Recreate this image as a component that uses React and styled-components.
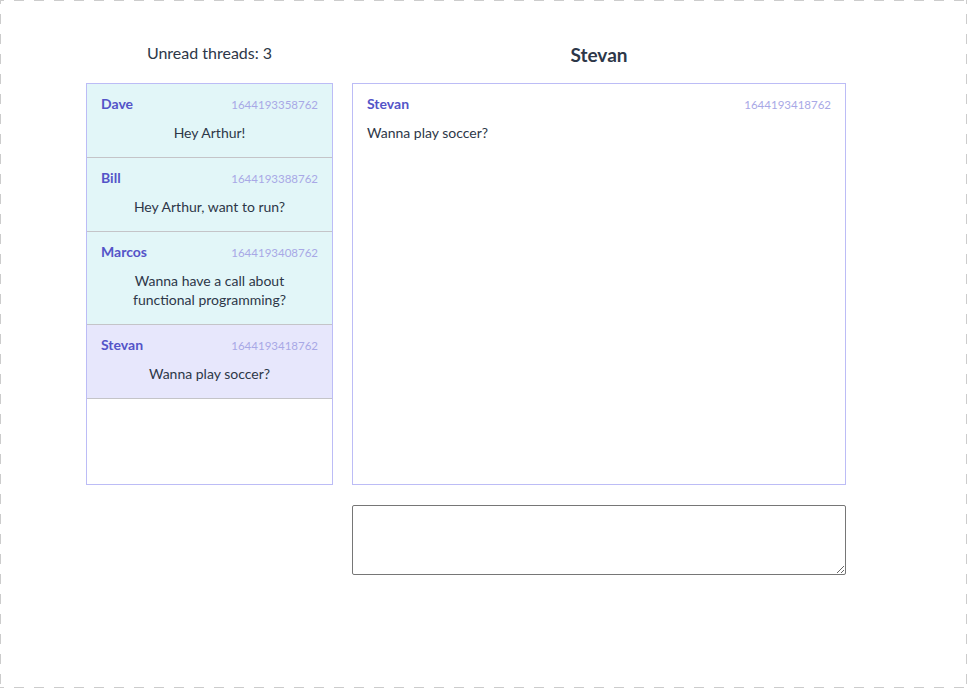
import styled, { createGlobalStyle } from "styled-components";

const GlobalStyle = createGlobalStyle`
  html, body {
    margin: 0;
    padding: 0;
    background: #ffffff;
  }
  body {
    font-family: Lato, "Noto Sans", sans-serif;
    color: #2d3748;
  }
`;

const threads = [
  { id: 1, name: "Dave", time: "1644193358762", text: "Hey Arthur!" },
  { id: 2, name: "Bill", time: "1644193388762", text: "Hey Arthur, want to run?" },
  {
    id: 3,
    name: "Marcos",
    time: "1644193408762",
    text: "Wanna have a call about functional programming?",
  },
  { id: 4, name: "Stevan", time: "1644193418762", text: "Wanna play soccer?" },
];

const selectedId = 4;

const App = () => {
  const selected = threads.find((t) => t.id === selectedId);

  return (
    <>
      <GlobalStyle />
      <Frame>
        <Column $width={247}>
          <Heading $size={16} $top={0}>
            Unread threads: 3
          </Heading>
          <ThreadList>
            {threads.map((t) => (
              <ThreadItem key={t.id} $active={t.id === selectedId}>
                <MetaRow>
                  <Author>{t.name}</Author>
                  <Stamp>{t.time}</Stamp>
                </MetaRow>
                <ThreadText>{t.text}</ThreadText>
              </ThreadItem>
            ))}
          </ThreadList>
        </Column>

        <Column $width={494}>
          <Heading $size={19} $bold $top={2}>
            {selected.name}
          </Heading>
          <ChatPanel>
            <MetaRow>
              <Author>{selected.name}</Author>
              <Stamp>{selected.time}</Stamp>
            </MetaRow>
            <ChatText>{selected.text}</ChatText>
          </ChatPanel>
          <Composer />
        </Column>
      </Frame>
    </>
  );
};

export default App;

const dash = "#cccccc";

const Frame = styled.div`
  box-sizing: border-box;
  width: 967px;
  height: 688px;
  display: flex;
  gap: 19px;
  padding: 41px 0 0 86px;
  background-image: linear-gradient(to right, ${dash} 50%, transparent 50%),
    linear-gradient(to right, ${dash} 50%, transparent 50%),
    linear-gradient(to bottom, ${dash} 50%, transparent 50%),
    linear-gradient(to bottom, ${dash} 50%, transparent 50%);
  background-size: 20px 1px, 20px 1px, 1px 20px, 1px 20px;
  background-repeat: repeat-x, repeat-x, repeat-y, repeat-y;
  background-position: 14px 0, 14px 100%, 0 14px, 100% 14px;
`;

const Column = styled.div`
  width: ${(p) => p.$width}px;
  display: flex;
  flex-direction: column;
`;

const Heading = styled.div`
  box-sizing: border-box;
  height: 42px;
  padding-top: ${(p) => p.$top}px;
  line-height: 24px;
  text-align: center;
  font-size: ${(p) => p.$size}px;
  font-weight: ${(p) => (p.$bold ? 700 : 400)};
  color: #2d3748;
`;

const ThreadList = styled.div`
  height: 402px;
  box-sizing: border-box;
  border: 1px solid #bcbcf6;
  overflow: hidden;
`;

const ThreadItem = styled.div`
  padding: 11px 14px 15px;
  background: ${(p) => (p.$active ? "#e7e7fc" : "#e2f6f8")};
  border-bottom: 1px solid #c4c4c8;
`;

const MetaRow = styled.div`
  display: flex;
  justify-content: space-between;
  align-items: baseline;
  height: 18px;
  line-height: 18px;
`;

const Author = styled.span`
  font-size: 14px;
  font-weight: 700;
  color: #5454c8;
`;

const Stamp = styled.span`
  font-size: 11.5px;
  color: #a8a8e6;
`;

const ThreadText = styled.div`
  margin-top: 10px;
  padding: 0 12px;
  font-size: 14px;
  line-height: 19px;
  text-align: center;
  color: #2d3748;
`;

const ChatPanel = styled.div`
  height: 402px;
  box-sizing: border-box;
  border: 1px solid #bcbcf6;
  padding: 11px 14px;
`;

const ChatText = styled.div`
  margin-top: 10px;
  font-size: 14px;
  line-height: 19px;
  color: #2d3748;
`;

const Composer = styled.textarea`
  box-sizing: border-box;
  width: 494px;
  height: 70px;
  margin: 20px 0 0;
  border: 1px solid #767676;
  border-radius: 2px;
  font-family: inherit;
`;
